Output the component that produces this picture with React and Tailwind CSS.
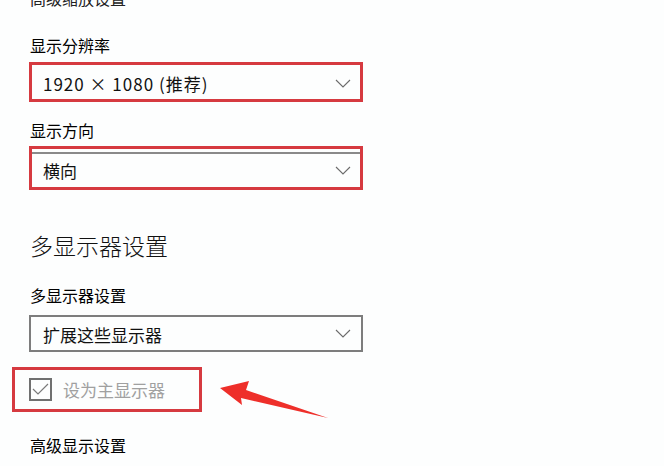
import React from "react";

const font = { fontFamily: '"Noto Sans CJK SC", "Noto Sans", sans-serif' };

function Chevron() {
  return (
    <svg width="16" height="9" viewBox="0 0 16 9" className="shrink-0">
      <polyline points="1,1 8,8 15,1" fill="none" stroke="#6b6b6b" strokeWidth="1.1" />
    </svg>
  );
}

export default function App() {
  return (
    <div className="relative w-[664px] h-[466px] overflow-hidden bg-[#fdfefe] text-black" style={font}>
      <div className="flex flex-col pl-[29px]">
        <div className="mt-[-12px] h-[20px] leading-[20px] text-[16px] pl-[1px] text-[#222]">高级缩放设置</div>

        <div className="mt-[27px] h-[20px] leading-[20px] text-[16px] pl-[1px]">显示分辨率</div>
        <div className="mt-[7px] w-[334px] h-[40px] border-[3px] border-[#d63a40] flex items-center justify-between pl-[11px] pr-[9px]">
          <span className="text-[17px] leading-[20px] mt-[4px] tracking-[1px] text-[#111]">1920 × 1080 (推荐)</span>
          <span className="mt-[2px]"><Chevron /></span>
        </div>

        <div className="mt-[18px] h-[20px] leading-[20px] text-[16px] pl-[1px]">显示方向</div>
        <div className="mt-[6px] w-[334px] h-[44px] border-[3px] border-[#d63a40] flex flex-col">
          <div className="h-[2px] mt-[3px] bg-[#8a8a8a]" />
          <div className="flex-1 flex items-center justify-between pl-[11px] pr-[9px]">
            <span className="text-[17px] leading-[20px] text-[#111]">横向</span>
            <Chevron />
          </div>
        </div>

        <div className="mt-[40px] h-[30px] leading-[30px] text-[23px] pl-[1px] text-[#111] font-light">多显示器设置</div>

        <div className="mt-[25px] h-[20px] leading-[20px] text-[16px] pl-[1px]">多显示器设置</div>
        <div className="mt-[10px] w-[334px] h-[37px] border-2 border-[#7d7d7d] flex items-center justify-between pl-[12px] pr-[10px]">
          <span className="text-[17px] leading-[20px] mt-[2px] text-[#111]">扩展这些显示器</span>
          <Chevron />
        </div>

        <div className="mt-[15px] ml-[-17px] w-[190px] h-[45px] border-[3px] border-[#d63a40] flex items-center pl-[14px]">
          <div className="w-[23px] h-[23px] border-2 border-[#707070] flex items-center justify-center">
            <svg width="17" height="13" viewBox="0 0 17 13">
              <polyline points="1,6 6,11 16,1" fill="none" stroke="#7a7a7a" strokeWidth="1.2" />
            </svg>
          </div>
          <span className="ml-[11px] text-[17px] leading-[20px] text-[#a0a0a0]">设为主显示器</span>
        </div>

        <div className="mt-[23px] h-[20px] leading-[20px] text-[16px] pl-[1px]">高级显示设置</div>
      </div>

      <svg className="absolute left-0 top-0" width="664" height="466" viewBox="0 0 664 466">
        <polygon
          points="220,388 249,381 246,390 328,418 241,398 242,405"
          fill="#ee2f2a"
        />
      </svg>
    </div>
  );
}
